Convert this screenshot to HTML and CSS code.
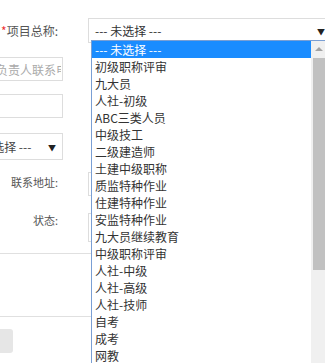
FILE: index.html
```html
<!DOCTYPE html>
<html lang="zh-CN">
<head>
    <meta charset="UTF-8">
    <title>项目信息</title>
    <link rel="stylesheet" href="styles.css">
</head>
<body>
<div class="page">
    <div class="row row-project">
        <label class="label"><span class="req">*</span>项目总称:</label>
        <div class="select select-wide">
            <span class="select-text">--- 未选择 ---</span>
            <span class="arrow">▼</span>
        </div>
    </div>
    <div class="row row-phone">
        <input class="input left-input" type="text" placeholder="请输入负责人联系电话">
    </div>
    <div class="row row-empty">
        <input class="input left-input" type="text">
    </div>
    <div class="row row-pick">
        <div class="select left-select">
            <span class="select-text">--- 请选择 ---</span>
            <span class="arrow">▼</span>
        </div>
    </div>
    <div class="row row-address">
        <label class="label label-small">联系地址:</label>
        <input class="input right-input" type="text">
    </div>
    <div class="row row-status">
        <label class="label label-small">状态:</label>
        <div class="input right-input status-box"></div>
    </div>
    <hr class="line line-first">
    <hr class="line line-second">
    <button class="btn" type="button"></button>

    <div class="dropdown">
        <ul class="options">
            <li class="active">--- 未选择 ---</li>
            <li>初级职称评审</li>
            <li>九大员</li>
            <li>人社-初级</li>
            <li>ABC三类人员</li>
            <li>中级技工</li>
            <li>二级建造师</li>
            <li>土建中级职称</li>
            <li>质监特种作业</li>
            <li>住建特种作业</li>
            <li>安监特种作业</li>
            <li>九大员继续教育</li>
            <li>中级职称评审</li>
            <li>人社-中级</li>
            <li>人社-高级</li>
            <li>人社-技师</li>
            <li>自考</li>
            <li>成考</li>
            <li>网教</li>
        </ul>
        <div class="scrollbar">
            <div class="scroll-up"></div>
            <div class="scroll-thumb"></div>
        </div>
    </div>
</div>
</body>
</html>
```

FILE: styles.css
```css
html, body {
    margin: 0;
    padding: 0;
    background: #fff;
    overflow: hidden;
}
body {
    font-family: "Noto Sans CJK SC", "Noto Sans", sans-serif;
    font-size: 12px;
    color: #555;
}
.page {
    position: relative;
    width: 325px;
    height: 363px;
    padding-top: 18px;
    box-sizing: border-box;
}
.row {
    display: flex;
    align-items: center;
}
.label {
    width: 58px;
    flex: none;
    text-align: right;
    line-height: 16px;
    white-space: nowrap;
    margin-right: 30px;
}
.label-small {
    font-size: 11px;
}
.req {
    color: #e33;
}
.select {
    position: relative;
    flex: none;
    height: 25px;
    border: 1px solid #ddd;
    box-sizing: border-box;
    display: flex;
    align-items: center;
    color: #333;
    overflow: hidden;
    white-space: nowrap;
}
.select-wide {
    width: 250px;
    padding-left: 6px;
}
.select-text {
    line-height: 16px;
}
.arrow {
    position: absolute;
    font-size: 8px;
    color: #222;
    top: 50%;
    transform: translateY(-50%);
}
.select-wide .arrow {
    left: 228px;
}
.input {
    flex: none;
    height: 24px;
    border: 1px solid #ddd;
    box-sizing: border-box;
    padding: 0 6px;
    font-family: inherit;
    font-size: 12px;
    color: #333;
    outline: none;
    background: #fff;
}
.input::placeholder {
    color: #aaa;
}
.left-input {
    margin-left: -47px;
    width: 110px;
    padding-right: 1px;
}
.left-select {
    margin-left: -51px;
    width: 114px;
    height: 27px;
    padding-left: 15px;
    color: #444;
}
.left-select .arrow {
    left: 98px;
}
.row-phone {
    margin-top: 14px;
}
.row-empty {
    margin-top: 13px;
}
.row-pick {
    margin-top: 15px;
}
.row-address {
    margin-top: 12px;
}
.row-address .label {
    margin-top: -4px;
}
.row-status {
    margin-top: 17px;
    align-items: flex-start;
}
.row-status .label {
    margin-top: -1px;
}
.right-input {
    width: 240px;
}
.status-box {
    height: 29px;
}
.line {
    border: none;
    border-top: 1px solid #e0e0e0;
    margin: 0;
}
.line-first {
    margin-top: 11px;
}
.line-second {
    margin-top: 62px;
}
.btn {
    display: block;
    margin: 12px 0 0 -30px;
    width: 43px;
    height: 24px;
    border: none;
    border-radius: 3px;
    background: #e6e6e6;
}

/* opened select list */
.dropdown {
    position: absolute;
    left: 91px;
    top: 40px;
    width: 240px;
    height: 330px;
    border: 1px solid #7a9fd4;
    background: #fff;
    display: flex;
    overflow: hidden;
}
.options {
    list-style: none;
    margin: 0;
    padding: 0;
    width: 219px;
    flex: none;
    color: #333;
}
.options li {
    height: 17px;
    line-height: 17px;
    padding-left: 3px;
    white-space: nowrap;
}
.options li.active {
    background: #1a8cff;
    color: #fff;
}
.scrollbar {
    width: 17px;
    flex: none;
    background: #f0f0f0;
    display: flex;
    flex-direction: column;
    align-items: center;
}
.scroll-up {
    height: 17px;
    width: 100%;
    position: relative;
}
.scroll-up::after {
    content: "";
    position: absolute;
    left: 4px;
    top: 6px;
    border-left: 4px solid transparent;
    border-right: 4px solid transparent;
    border-bottom: 4px solid #a3a3a3;
}
.scroll-thumb {
    width: 13px;
    height: 212px;
    background: #c1c1c1;
}
```
